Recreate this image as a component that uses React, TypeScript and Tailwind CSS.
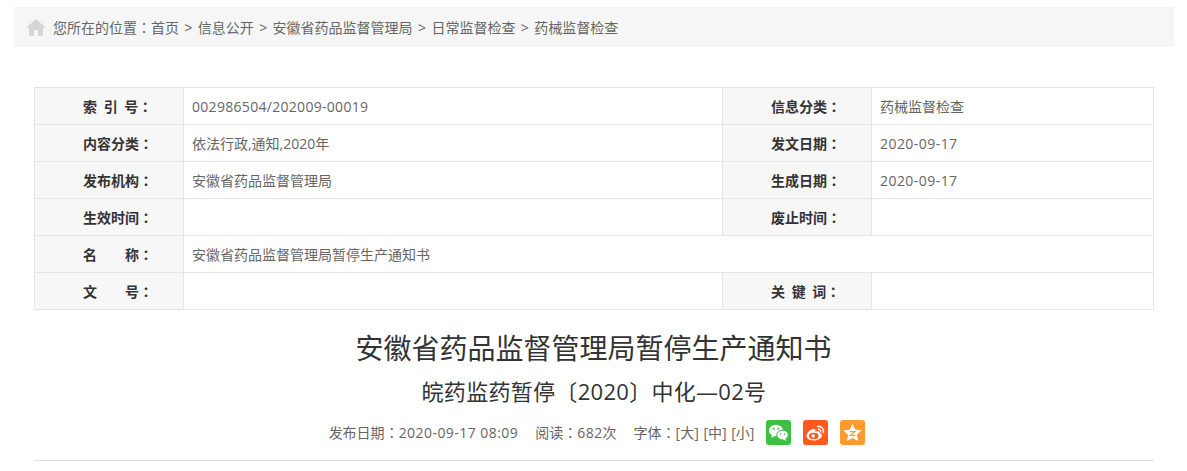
import type { ReactNode } from "react";

function Colon() {
  return <span className="font-['Noto_Sans_CJK_TC',sans-serif]">：</span>;
}

function Num({ children }: { children: ReactNode }) {
  return <span className="tracking-[0.45px]">{children}</span>;
}

function Label({ children }: { children: ReactNode }) {
  return (
    <td className="w-[149px] border border-[#e5e5e5] bg-[#f7f7f7] pl-[48px] text-left text-sm font-bold whitespace-pre text-[#333] [word-spacing:3px]">
      {children}
      <Colon />
    </td>
  );
}

function Value({ children, colSpan }: { children?: ReactNode; colSpan?: number }) {
  return (
    <td colSpan={colSpan} className="border border-[#e5e5e5] pt-[2px] pl-2 text-sm text-[#666]">
      {children}
    </td>
  );
}

function Sep() {
  return <span className="mx-[5.4px]">&gt;</span>;
}

function HomeIcon() {
  return (
    <svg width="20" height="17" viewBox="0 0 20 17" className="shrink-0">
      <path d="M10 0 L20 9 L17 9 L17 17 L12 17 L12 11 L8 11 L8 17 L3 17 L3 9 L0 9 Z" fill="#d6d6d6" />
    </svg>
  );
}

function WechatIcon() {
  return (
    <svg width="25" height="25" viewBox="0 0 25 25">
      <rect width="25" height="25" rx="3" fill="#3bc041" />
      <ellipse cx="10" cy="10.5" rx="7" ry="5.8" fill="#fff" />
      <path d="M6 14 L5.5 18 L9.5 15.5 Z" fill="#fff" />
      <ellipse cx="16.5" cy="15" rx="5.8" ry="4.8" fill="#fff" stroke="#3bc041" strokeWidth="1" />
      <path d="M19 18.5 L20.5 21 L16.5 19 Z" fill="#fff" />
      <circle cx="7.7" cy="8.7" r="1" fill="#3bc041" />
      <circle cx="12.3" cy="8.7" r="1" fill="#3bc041" />
      <circle cx="14.6" cy="14" r="0.8" fill="#3bc041" />
      <circle cx="18.6" cy="14" r="0.8" fill="#3bc041" />
    </svg>
  );
}

function WeiboIcon() {
  return (
    <svg width="25" height="25" viewBox="0 0 25 25">
      <rect width="25" height="25" rx="3" fill="#ff5a1c" />
      <path d="M10.5 20.5 C6.5 20.5 3.5 18.6 3.5 15.8 C3.5 13 7.8 8.8 10.6 8.8 C12.4 8.8 12.7 10.3 12.2 11.8 C14 11.1 16.6 11 16.6 12.9 C19 13.6 19.4 14.9 19 16 C18.1 18.7 14.4 20.5 10.5 20.5 Z" fill="#fff" />
      <ellipse cx="10.8" cy="15.9" rx="4.8" ry="3.2" fill="#ff5a1c" />
      <circle cx="10.2" cy="16" r="1.7" fill="#fff" />
      <path d="M14.6 6.5 C18 5.8 21.2 8.6 20.4 12.6" fill="none" stroke="#fff" strokeWidth="1.5" strokeLinecap="round" />
      <path d="M15.2 9.3 C16.6 9 18 10.2 17.7 11.8" fill="none" stroke="#fff" strokeWidth="1.3" strokeLinecap="round" />
    </svg>
  );
}

function StarIcon() {
  return (
    <svg width="25" height="25" viewBox="0 0 25 25">
      <rect width="25" height="25" rx="3" fill="#ff9a2e" />
      <path d="M12.5 3.8 L15.2 9.6 L21.5 10.4 L16.9 14.7 L18.1 21 L12.5 17.9 L6.9 21 L8.1 14.7 L3.5 10.4 L9.8 9.6 Z" fill="#fff" />
      <path d="M10 11.6 L15 11.6 L10.4 15.4 L15.2 15.4" fill="none" stroke="#ff9a2e" strokeWidth="1.2" />
    </svg>
  );
}

export default function App() {
  return (
    <div className="h-[471px] w-[1187px] overflow-hidden bg-white pt-[7px] pl-[14px] font-['Open_Sans','Noto_Sans_CJK_SC',sans-serif] text-[#666]">
      <div className="flex h-10 w-[1160px] items-center gap-[7px] bg-[#f6f6f6] pl-3 text-sm text-[#666]">
        <HomeIcon />
        <span className="whitespace-pre">
          您所在的位置
          <Colon />
          首页
          <Sep />
          信息公开
          <Sep />
          安徽省药品监督管理局
          <Sep />
          日常监督检查
          <Sep />
          药械监督检查
        </span>
      </div>

      <div className="mt-10 ml-5 w-[1120px]">
        <table className="w-[1120px] table-fixed border-collapse [&_tr]:h-[37px]">
          <colgroup>
            <col className="w-[149px]" />
            <col className="w-[539px]" />
            <col className="w-[149px]" />
            <col />
          </colgroup>
          <tbody>
            <tr>
              <Label>索 引 号</Label>
              <Value>
                <span className="tracking-[0.3px]">002986504/202009-00019</span>
              </Value>
              <Label>信息分类</Label>
              <Value>药械监督检查</Value>
            </tr>
            <tr>
              <Label>内容分类</Label>
              <Value>依法行政,通知,2020年</Value>
              <Label>发文日期</Label>
              <Value>
                <Num>2020-09-17</Num>
              </Value>
            </tr>
            <tr>
              <Label>发布机构</Label>
              <Value>安徽省药品监督管理局</Value>
              <Label>生成日期</Label>
              <Value>
                <Num>2020-09-17</Num>
              </Value>
            </tr>
            <tr>
              <Label>生效时间</Label>
              <Value />
              <Label>废止时间</Label>
              <Value />
            </tr>
            <tr>
              <Label>名　　称</Label>
              <Value colSpan={3}>安徽省药品监督管理局暂停生产通知书</Value>
            </tr>
            <tr>
              <Label>文　　号</Label>
              <Value />
              <Label>关 键 词</Label>
              <Value />
            </tr>
          </tbody>
        </table>

        <h1 className="mt-[18px] pr-[1px] text-center text-[28px] leading-10 font-normal text-[#333]">
          安徽省药品监督管理局暂停生产通知书
        </h1>
        <h2 className="mt-[7px] text-center text-[22px] leading-8 font-normal tracking-[0.3px] text-[#333]">
          皖药监药暂停〔2020〕中化—02号
        </h2>
        <div className="mt-[9px] flex h-[33px] items-center justify-center pl-[6px] text-sm text-[#666]">
          <span>
            发布日期
            <Colon />
            <Num>2020-09-17 08:09</Num>
          </span>
          <span className="ml-[17px]">
            阅读
            <Colon />
            <Num>682</Num>次
          </span>
          <span className="ml-[17px] [word-spacing:1px]">
            字体
            <Colon />
            [大] [中] [小]
          </span>
          <span className="ml-[12px] flex gap-[12px]">
            <WechatIcon />
            <WeiboIcon />
            <StarIcon />
          </span>
        </div>
        <div className="mt-[11px] border-b border-[#ddd]" />
      </div>
    </div>
  );
}
